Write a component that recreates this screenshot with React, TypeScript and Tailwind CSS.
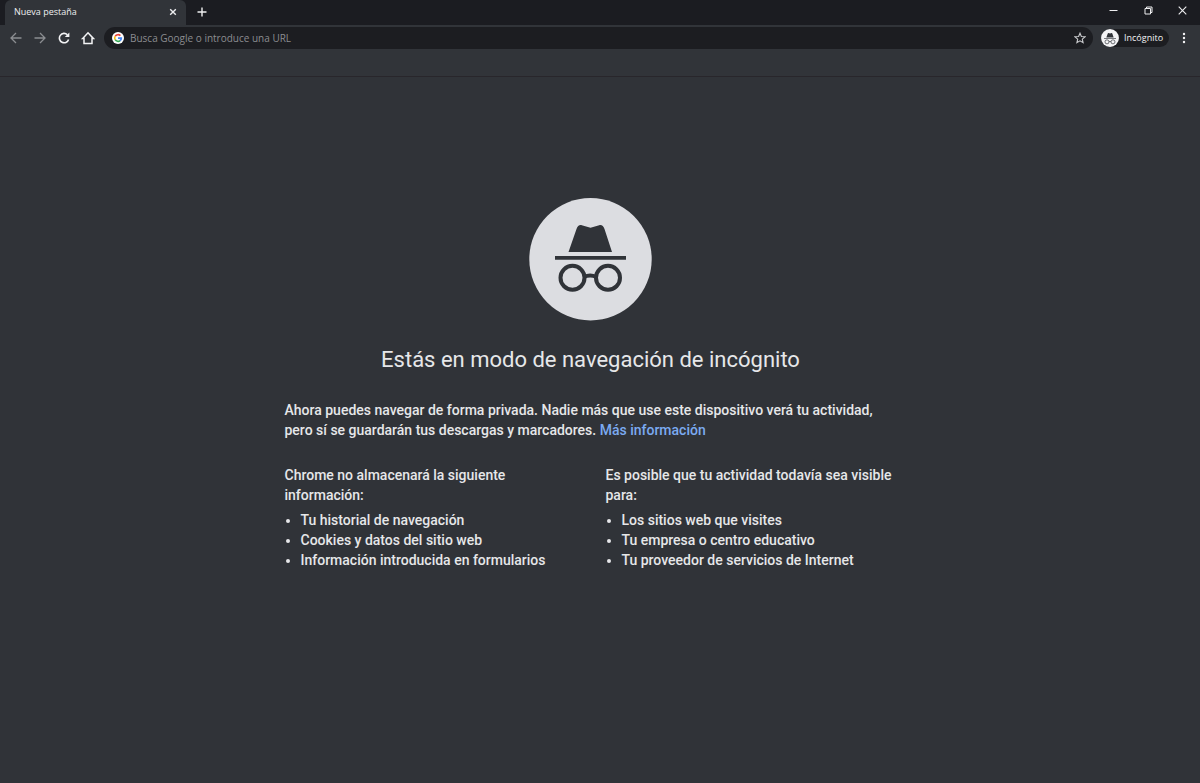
import type { ReactNode } from 'react';

function SpyMark() {
  return (
    <>
      <path d="M39.500 54h43.500L75.500 31c-1-3-2.800-4.400-5.300-3.800L61.500 29.800l-8.700-2.600c-2.500-.6-4.300.8-5.300 3.800z" />
      <path d="M26 58h71v3.800H26z" />
      <g fill="none" stroke="currentColor" strokeWidth="4">
        <circle cx="43.500" cy="79.800" r="12" />
        <circle cx="79" cy="79.800" r="12" />
        <path d="M55 79q6-3 12.500 0" />
      </g>
    </>
  );
}

function IconButton({ label, className = '', children }: { label: string; className?: string; children: ReactNode }) {
  return (
    <button type="button" aria-label={label} className={`flex shrink-0 items-center justify-center ${className}`}>
      {children}
    </button>
  );
}

function TabStrip() {
  return (
    <header className="flex h-[25px] items-stretch bg-[#1b1c21] text-[#eeeef0]">
      <div className="ml-[5px] flex w-[181px] items-center justify-between rounded-t-md bg-[#313439] pr-[7px] pb-[2px] pl-[9px]">
        <span className="text-[9px]">Nueva pestaña</span>
        <IconButton label="Cerrar pestaña" className="size-3">
          <svg width="8" height="8" viewBox="0 0 8 8" stroke="currentColor" strokeWidth="1.4">
            <path d="M1.200 1.200l5.600 5.600M6.800 1.200L1.200 6.800" />
          </svg>
        </IconButton>
      </div>
      <IconButton label="Nueva pestaña" className="w-8 pb-[2px]">
        <svg width="10" height="10" viewBox="0 0 10 10" stroke="currentColor" strokeWidth="1.400">
          <path d="M5 .5v9M.5 5h9" />
        </svg>
      </IconButton>
      <div className="ml-auto flex pb-[5px]">
        <IconButton label="Minimizar" className="w-[35px]">
          <svg width="9" height="9" viewBox="0 0 9 9" stroke="currentColor">
            <path d="M.5 4.500h8" />
          </svg>
        </IconButton>
        <IconButton label="Restaurar" className="w-[34px]">
          <svg width="9" height="9" viewBox="0 0 9 9" fill="none" stroke="currentColor">
            <path d="M1 2.500h5.500V8H1zM2.500 2.500V1H8v5.500H6.500" />
          </svg>
        </IconButton>
        <IconButton label="Cerrar" className="w-[35px]">
          <svg width="9" height="9" viewBox="0 0 9 9" stroke="currentColor" strokeWidth="1.100">
            <path d="M.7.700l7.600 7.600M8.300.700L.7 8.300" />
          </svg>
        </IconButton>
      </div>
    </header>
  );
}

function GoogleBadge() {
  return (
    <svg className="shrink-0" width="12" height="12" viewBox="0 0 24 24" aria-hidden="true">
      <circle cx="12" cy="12" r="12" fill="#fff" />
      <g fill="none" strokeWidth="3.200">
        <path d="M6.300 8.600A6.700 6.700 0 0 1 16.800 7.300" stroke="#ea4335" />
        <path d="M6.300 15.400a6.700 6.700 0 0 1 0-6.800" stroke="#fbbc05" />
        <path d="M16.300 17.200A6.700 6.700 0 0 1 6.300 15.400" stroke="#34a853" />
        <path d="M12 12.300h6.700a6.700 6.700 0 0 1-2.400 4.900" stroke="#4285f4" />
      </g>
    </svg>
  );
}

function Toolbar() {
  return (
    <nav className="flex h-[27px] items-center bg-[#313439] pr-2 pb-[1px] pl-1 text-[#f3f3f5]">
      <IconButton label="Atrás" className="size-6 text-[#8b8d91]">
        <svg width="12" height="12" viewBox="0 0 12 12" fill="none" stroke="currentColor" strokeWidth="1.300">
          <path d="M11.500 6H1.200M6 1L1 6l5 5" />
        </svg>
      </IconButton>
      <IconButton label="Adelante" className="size-6 text-[#8b8d91]">
        <svg width="12" height="12" viewBox="0 0 12 12" fill="none" stroke="currentColor" strokeWidth="1.300">
          <path d="M.5 6h10.300M6 1l5 5-5 5" />
        </svg>
      </IconButton>
      <IconButton label="Volver a cargar" className="size-6">
        <svg width="12" height="12" viewBox="0 0 12 12" fill="none" stroke="currentColor" strokeWidth="1.600">
          <path d="M10.600 7.500A4.700 4.700 0 1 1 9.400 2.700" />
          <path d="M11.400.500v4.600H6.800z" fill="currentColor" stroke="none" />
        </svg>
      </IconButton>
      <IconButton label="Página principal" className="size-6">
        <svg width="14" height="14" viewBox="0 0 14 14" fill="none" stroke="currentColor" strokeWidth="1.500">
          <path d="M1.700 7.400L7 1.800l5.300 5.600H11V12.500H3V7.400z" />
        </svg>
      </IconButton>
      <div className="ml-1 flex h-[22px] flex-1 items-center rounded-full bg-[#1c1d21] pr-[7px] pl-2">
        <GoogleBadge />
        <input
          type="text"
          aria-label="Barra de direcciones"
          placeholder="Busca Google o introduce una URL"
          className="ml-[6px] min-w-0 flex-1 bg-transparent text-[10px] placeholder:text-[#8b8c90] outline-none"
        />
        <IconButton label="Añadir a marcadores" className="text-[#c9cacd]">
          <svg width="12" height="12" viewBox="0 0 12 12" fill="none" stroke="currentColor" strokeWidth="1.100">
            <path d="M6 1.200l1.400 3.300 3.600.3-2.700 2.400.8 3.500L6 8.800l-3.100 1.900.8-3.500L1 4.800l3.600-.3z" />
          </svg>
        </IconButton>
      </div>
      <button type="button" className="ml-2 flex h-[18px] w-[68px] items-center gap-[5px] rounded-full bg-[#1c1d21] text-[9px]">
        <svg className="shrink-0" width="18" height="18" viewBox="0 0 123 123" aria-hidden="true">
          <circle cx="61.500" cy="61.500" r="61" fill="#f3f3f5" />
          <g className="text-[#303338]" fill="currentColor" transform="translate(-9 -4) scale(1.150)">
            <SpyMark />
          </g>
        </svg>
        Incógnito
      </button>
      <IconButton label="Menú" className="ml-[7px] h-5 w-4">
        <svg width="4" height="12" viewBox="0 0 4 12" fill="currentColor">
          <circle cx="2" cy="2" r="1.200" />
          <circle cx="2" cy="6" r="1.200" />
          <circle cx="2" cy="10" r="1.200" />
        </svg>
      </IconButton>
    </nav>
  );
}

function InfoColumn({ title, items }: { title: string; items: string[] }) {
  return (
    <section className="flex-1">
      <p>{title}</p>
      <ul className="mt-[5px] list-disc pl-4">
        {items.map((item) => (
          <li key={item}>{item}</li>
        ))}
      </ul>
    </section>
  );
}

export default function App() {
  return (
    <div className="flex min-h-screen flex-col bg-[#303338] font-['Open_Sans','Noto_Sans',sans-serif]">
      <TabStrip />
      <Toolbar />
      <div className="h-[25px] border-b border-[#28262b] bg-[#313439]" />
      <main className="flex flex-1 flex-col items-center pt-[121px] pr-[19px] font-[Roboto,sans-serif] text-[#e6e7e9]">
        <svg width="123" height="123" viewBox="0 0 123 123" role="img" aria-label="Incógnito">
          <circle cx="61.500" cy="61.200" r="61.200" fill="#dcdde1" />
          <g className="text-[#303338]" fill="currentColor">
            <SpyMark />
          </g>
        </svg>
        <h1 className="mt-[25px] text-[22px] leading-7">Estás en modo de navegación de incógnito</h1>
        <div className="mt-[26px] w-full max-w-[612px] text-[14px] leading-[20px] font-medium">
          <p>
            Ahora puedes navegar de forma privada. Nadie más que use este dispositivo verá tu actividad, pero sí se
            guardarán tus descargas y marcadores.{' '}
            <a href="#informacion" className="text-[#7baaf0]">
              Más información
            </a>
          </p>
          <div className="mt-[25px] flex gap-[30px]">
            <InfoColumn
              title="Chrome no almacenará la siguiente información:"
              items={['Tu historial de navegación', 'Cookies y datos del sitio web', 'Información introducida en formularios']}
            />
            <InfoColumn
              title="Es posible que tu actividad todavía sea visible para:"
              items={['Los sitios web que visites', 'Tu empresa o centro educativo', 'Tu proveedor de servicios de Internet']}
            />
          </div>
        </div>
      </main>
    </div>
  );
}
